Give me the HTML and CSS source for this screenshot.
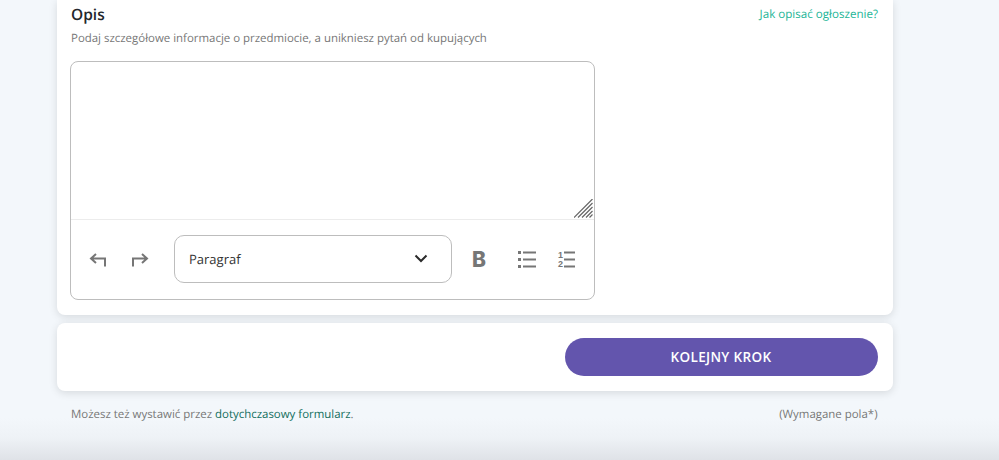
FILE: index.html
```html
<!DOCTYPE html>
<html lang="pl">
<head>
    <meta charset="UTF-8">
    <title>Opis</title>
    <link rel="stylesheet" href="styles.css">
</head>
<body>

<div class="page">
    <section class="card card-form">
        <div class="field-head">
            <h2>Opis</h2>
            <a class="help-link" href="#">Jak opisać ogłoszenie?</a>
        </div>
        <p class="hint">Podaj szczegółowe informacje o przedmiocie, a unikniesz pytań od kupujących</p>

        <div class="editor">
            <div class="editor-area">
                <svg class="resize" width="19" height="19" viewBox="0 0 19 19">
                    <path d="M0 18.500L18.500 0M4 18.500L18.500 4M8 18.500L18.500 8M12 18.500L18.500 12M15.500 18.500L18.500 15.500" fill="none" stroke="#666" stroke-width="1.200"/>
                </svg>
            </div>
            <div class="toolbar">
                <button class="tool tool-undo" aria-label="Cofnij">
                    <svg width="18" height="14" viewBox="0 0 18 14">
                        <path d="M16 13.500V5.500H2M7 1L2 5.500L7 10" fill="none" stroke="#767676" stroke-width="2"/>
                    </svg>
                </button>
                <button class="tool tool-redo" aria-label="Ponów">
                    <svg width="18" height="14" viewBox="0 0 18 14">
                        <path d="M2 13.500V5.500H16M11 1L16 5.500L11 10" fill="none" stroke="#767676" stroke-width="2"/>
                    </svg>
                </button>
                <div class="select">
                    <span>Paragraf</span>
                    <svg width="14" height="9" viewBox="0 0 14 9">
                        <path d="M1.500 1.500L7 7L12.500 1.500" fill="none" stroke="#2b2b2b" stroke-width="2"/>
                    </svg>
                </div>
                <button class="tool tool-bold" aria-label="Pogrubienie">B</button>
                <button class="tool tool-list" aria-label="Lista">
                    <svg width="18" height="17" viewBox="0 0 18 17">
                        <path d="M5 1.500H18M5 8.500H18M5 15.500H18" stroke="#767676" stroke-width="2"/>
                        <path d="M0 0H3V3H0ZM0 7H3V10H0ZM0 14H3V17H0Z" fill="#767676"/>
                    </svg>
                </button>
                <button class="tool tool-olist" aria-label="Lista numerowana">
                    <span class="nums"><span>1</span><span>2</span></span>
                    <svg width="11" height="17" viewBox="0 0 11 17">
                        <path d="M0 1.500H11M0 8.500H11M0 15.500H11" stroke="#767676" stroke-width="2"/>
                    </svg>
                </button>
            </div>
        </div>
    </section>

    <section class="card card-actions">
        <button class="next-btn">KOLEJNY KROK</button>
    </section>

    <footer class="form-foot">
        <span>Możesz też wystawić przez <a href="#">dotychczasowy formularz</a>.</span>
        <span>(Wymagane pola*)</span>
    </footer>
</div>

</body>
</html>
```

FILE: styles.css
```css
html, body {
    margin: 0;
    height: 460px;
    overflow: hidden;
}
body {
    font-family: "Open Sans", Arial, sans-serif;
    text-rendering: geometricPrecision;
    background: linear-gradient(to bottom, #f3f7fb 0, #f3f7fb 418px, #eef2f6 438px, #dfe2e7 460px);
    color: #2b2b2b;
}
.page {
    width: 836px;
    margin-left: 56.5px;
}
.card {
    background-color: #fff;
    border-radius: 0 0 8px 8px;
    box-shadow: 0 2px 8px rgba(0, 0, 0, 0.12);
}
.card-form {
    height: 315px;
    box-sizing: border-box;
    padding: 4px 14.5px 0 13.5px;
}
.field-head {
    display: flex;
    justify-content: space-between;
    align-items: center;
    padding-left: 1px;
    height: 22px;
}
h2 {
    margin: -1px 0 1px;
    font-size: 15.5px;
    font-weight: 600;
    line-height: 22px;
    color: #23272b;
}
.help-link {
    margin-top: -1px;
    font-size: 11.6px;
    color: #1cb596;
    text-decoration: none;
}
.hint {
    margin: 4px 0 0 1px;
    font-size: 11.45px;
    line-height: 18px;
    color: #777;
}
.editor {
    width: 525px;
    height: 239px;
    box-sizing: border-box;
    margin-top: 13px;
    border: 1px solid #bdbdbd;
    border-radius: 8px;
    display: flex;
    flex-direction: column;
}
.editor-area {
    height: 158px;
    flex: none;
    box-sizing: border-box;
    padding: 0 1px 1px 0;
    display: flex;
    justify-content: flex-end;
    align-items: flex-end;
    border-bottom: 1px solid #ececec;
}
.resize {
    display: block;
}
.toolbar {
    flex: 1;
    display: flex;
    align-items: center;
    padding: 0 0 0 18px;
}
.tool {
    border: 0;
    padding: 0;
    background: none;
    display: flex;
    align-items: center;
    color: #767676;
}
.tool-redo {
    margin-left: 24px;
}
.select {
    width: 278px;
    height: 48px;
    box-sizing: border-box;
    margin: 0 0 2px 25px;
    padding: 0 23px 0 14px;
    border: 1px solid #bdbdbd;
    border-radius: 10px;
    display: flex;
    justify-content: space-between;
    align-items: center;
    font-size: 13px;
    color: #333;
}
.tool-bold {
    margin-left: 20px;
    font-family: "Inter", sans-serif;
    font-size: 21px;
    font-weight: 800;
    line-height: 24px;
}
.tool-list {
    margin-left: 32px;
}
.tool-olist {
    margin-left: 21px;
    gap: 0;
}
.nums {
    display: flex;
    flex-direction: column;
    font-size: 9px;
    font-weight: 700;
    line-height: 9px;
    width: 7px;
}
.card-actions {
    height: 68px;
    box-sizing: border-box;
    margin-top: 8px;
    padding: 15px 15px 0 0;
    border-radius: 8px;
    display: flex;
    justify-content: flex-end;
    align-items: flex-start;
}
.next-btn {
    width: 313px;
    height: 38px;
    border: 0;
    border-radius: 19px;
    background-color: #6355ad;
    color: #fff;
    font-family: inherit;
    font-size: 13.5px;
    font-weight: 600;
    letter-spacing: 0.35px;
}
.form-foot {
    display: flex;
    justify-content: space-between;
    margin-top: 15px;
    padding: 0 15px 0 14.5px;
    font-size: 11.45px;
    line-height: 18px;
    color: #777;
}
.form-foot a {
    color: #126e5d;
    text-decoration: none;
}
```
